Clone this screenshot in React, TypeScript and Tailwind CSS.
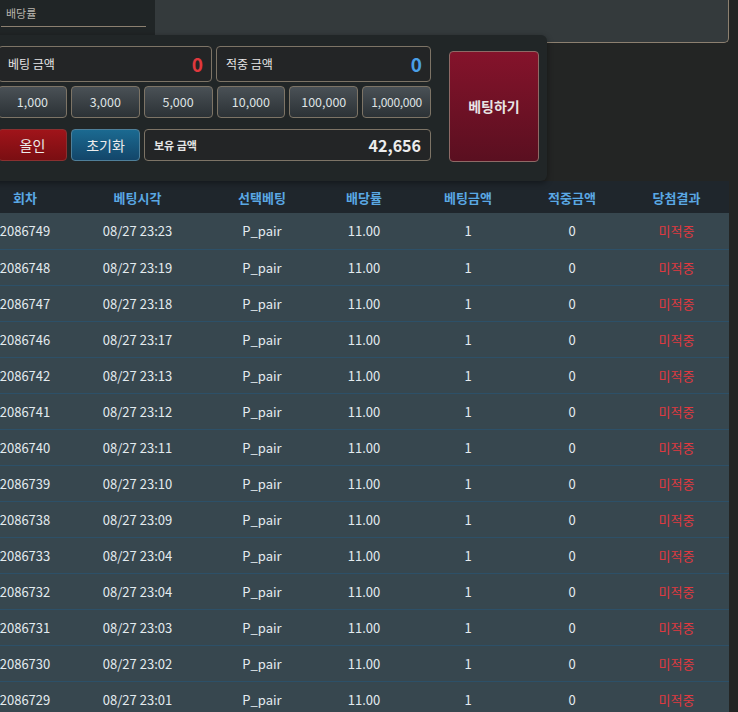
import React from "react";

// Rows of the bet history table
interface BetRow {
  round: string;
  time: string;
  pick: string;
  odds: string;
  amount: number;
  win: number;
  result: string;
}

const rows: BetRow[] = [
  ["2086749", "08/27 23:23"],
  ["2086748", "08/27 23:19"],
  ["2086747", "08/27 23:18"],
  ["2086746", "08/27 23:17"],
  ["2086742", "08/27 23:13"],
  ["2086741", "08/27 23:12"],
  ["2086740", "08/27 23:11"],
  ["2086739", "08/27 23:10"],
  ["2086738", "08/27 23:09"],
  ["2086733", "08/27 23:04"],
  ["2086732", "08/27 23:04"],
  ["2086731", "08/27 23:03"],
  ["2086730", "08/27 23:02"],
  ["2086729", "08/27 23:01"],
].map(([round, time]) => ({
  round,
  time,
  pick: "P_pair",
  odds: "11.00",
  amount: 1,
  win: 0,
  result: "미적중",
}));

const chips = ["1,000", "3,000", "5,000", "10,000", "100,000", "1,000,000"];

const headers = ["회차", "베팅시각", "선택베팅", "배당률", "베팅금액", "적중금액", "당첨결과"];
const colWidths = ["w-[76px]", "w-[149px]", "w-[100px]", "w-[104px]", "w-[104px]", "w-[104px]", "w-[105px]"];

const App = (): JSX.Element => {
  return (
    <div
      className="min-h-screen w-[738px] overflow-hidden bg-[#232524] text-[#e3e6e8]"
      style={{ fontFamily: '"Noto Sans CJK KR", "Noto Sans", sans-serif' }}
    >
      {/* Top strip: odds label + info panel */}
      <div className="flex h-[43px]">
        <div className="h-[35px] w-[155px] shrink-0 bg-[#202526] pl-[1px] pr-[9px]">
          <div className="border-b border-[#8c8070] pt-[5px] pb-[4px] pl-[5px] text-[11px] leading-[17px] text-[#b9b5ae]">
            배당률
          </div>
        </div>
        <div className="h-[43px] w-[574px] rounded-br-[5px] border-r border-b border-[#8c8070] bg-[#343a3c]" />
      </div>

      {/* Betting panel */}
      <div className="relative z-10 -mt-[8px] ml-[-12px] flex w-[559px] gap-[18px] rounded-[6px] bg-[#212627] pt-[11px] pr-[8px] pb-[19px] pl-[10px] shadow-[0_2px_6px_rgba(0,0,0,0.4)]">
        <div className="flex w-[433px] flex-col">
          <div className="flex gap-[4px]">
            <div className="flex h-[36px] w-[214px] items-center justify-between rounded-[4px] border border-[#7d7466] bg-[#232526] pl-[9px] pr-[8px]">
              <span className="text-[12px] text-[#e6e6e6]">베팅 금액</span>
              <span className="text-[19px] font-bold text-[#e0383d]">0</span>
            </div>
            <div className="flex h-[36px] w-[215px] items-center justify-between rounded-[4px] border border-[#7d7466] bg-[#232526] pl-[9px] pr-[8px]">
              <span className="text-[12px] text-[#e6e6e6]">적중 금액</span>
              <span className="text-[19px] font-bold text-[#4a9fe6]">0</span>
            </div>
          </div>
          <div className="mt-[4px] grid grid-cols-6 gap-[4px]">
            {chips.map((c) => (
              <button
                key={c}
                className={`flex h-[32px] items-center justify-center rounded-[4px] border border-[#7d7466] bg-gradient-to-b from-[#4a5156] to-[#2c3236] text-[#dfe2e4] ${
                  c.length > 7 ? "text-[12px] tracking-[-0.3px]" : "text-[12.5px]"
                }`}
              >
                {c}
              </button>
            ))}
          </div>
          <div className="mt-[11px] flex gap-[4px]">
            <button className="h-[32px] w-[69px] rounded-[4px] border border-[#8a3030] bg-gradient-to-b from-[#a0141a] to-[#7a0e12] text-[14px] text-[#ececec]">
              올인
            </button>
            <button className="h-[32px] w-[69px] rounded-[4px] border border-[#4f7f99] bg-gradient-to-b from-[#1b6a91] to-[#13466a] text-[14px] text-[#ececec]">
              초기화
            </button>
            <div className="flex h-[32px] flex-1 items-center justify-between rounded-[4px] border border-[#7d7466] bg-[#232526] pl-[9px] pr-[9px]">
              <span className="text-[11px] font-bold text-[#e6e6e6]">보유 금액</span>
              <span className="text-[16px] font-bold text-[#ececec]">42,656</span>
            </div>
          </div>
        </div>
        <button className="mt-[5px] h-[111px] w-[90px] rounded-[4px] border border-[#8e6a66] bg-gradient-to-b from-[#85132b] to-[#5a0f20] text-[14px] font-bold text-[#e8e4e4]">
          베팅하기
        </button>
      </div>

      {/* History table */}
      <table className="ml-[-13px] w-[742px] table-fixed border-collapse text-center leading-none">
        <thead>
          <tr className="h-[32px] bg-[#1f262c]">
            {headers.map((h, i) => (
              <th key={h} className={`${colWidths[i]} p-0 text-[13px] font-bold text-[#5aa8e4]`}>
                {h}
              </th>
            ))}
          </tr>
        </thead>
        <tbody>
          {rows.map((r) => (
            <tr key={r.round} className="h-[36px] border-b border-[#2d5068] bg-[#37474f] text-[13px] text-[#e4ebef]">
              <td className="p-0">{r.round}</td>
              <td className="p-0">{r.time}</td>
              <td className="p-0">{r.pick}</td>
              <td className="p-0">{r.odds}</td>
              <td className="p-0">{r.amount}</td>
              <td className="p-0">{r.win}</td>
              <td className="p-0 text-[#e0393f]">{r.result}</td>
            </tr>
          ))}
        </tbody>
      </table>
    </div>
  );
};

export default App;
